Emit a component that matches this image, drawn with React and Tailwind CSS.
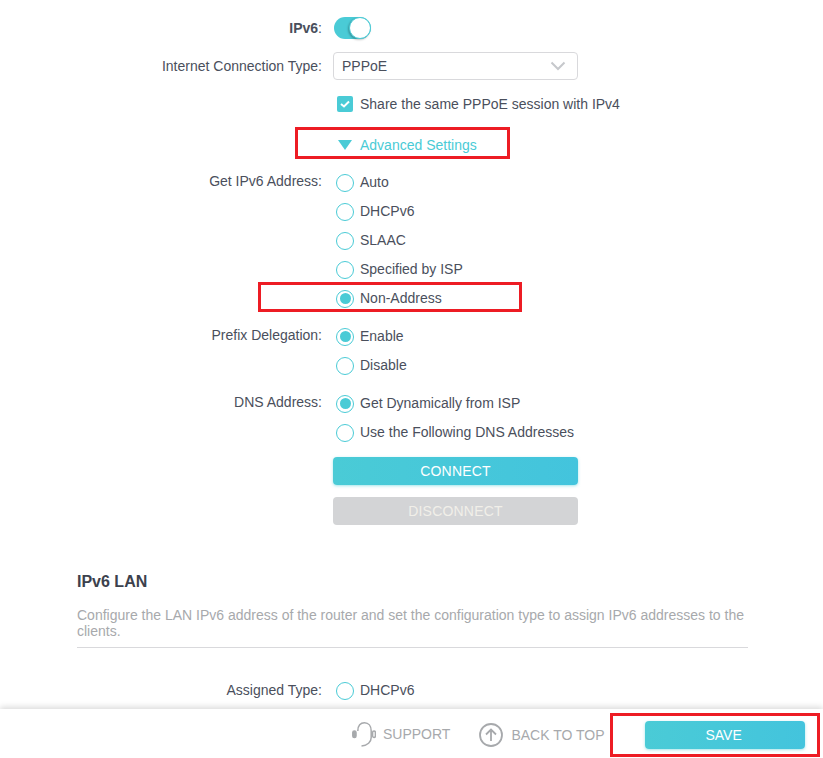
import React from "react";

const Radio = ({ label, checked }) => (
  <div className="flex items-center h-[29px]">
    <span className="w-[18px] h-[18px] ml-[3px] rounded-full border border-[#4acbd6] bg-white flex items-center justify-center">
      {checked && <span className="w-[11px] h-[11px] rounded-full bg-[#4acbd6]"></span>}
    </span>
    <span className="ml-[6px]">{label}</span>
  </div>
);

const Label = ({ children, className = "" }) => (
  <div className={`w-[322px] text-right ${className}`}>{children}</div>
);

const RedBox = ({ className }) => (
  <div className={`absolute border-[3px] border-[#ed1c24] pointer-events-none ${className}`}></div>
);

const App = () => {
  return (
    <div className="h-[758px] w-[823px] flex flex-col bg-white overflow-hidden text-[14px] text-[#4a4f5c] font-['Liberation_Sans',Arial,sans-serif]">
      <div className="relative flex-1 overflow-hidden">
        {/* ipv6 toggle */}
        <div className="flex items-center h-[24px] mt-[16px]">
          <Label>
            <span className="font-bold">IPv6</span>:
          </Label>
          <div className="ml-[12px] w-[37px] h-[22px] rounded-full bg-[#4acbd6] relative">
            <span className="absolute right-0 top-0 w-[22px] h-[22px] rounded-full bg-white border border-[#4acbd6] shadow-[-1px_1px_2px_rgba(0,0,0,0.25)]"></span>
          </div>
        </div>

        {/* connection type */}
        <div className="flex items-center h-[28px] mt-[12px]">
          <Label>Internet Connection Type:</Label>
          <div className="ml-[11px] w-[245px] h-[28px] rounded-[4px] border border-[#d9d9dc] flex items-center justify-between pl-[8px] pr-[11px]">
            <span>PPPoE</span>
            <svg width="16" height="10" viewBox="0 0 16 10" fill="none" stroke="#c6c8cc" strokeWidth="2">
              <path d="M1.5 1.5 L8 8 L14.5 1.5" />
            </svg>
          </div>
        </div>

        {/* share session */}
        <div className="flex items-center h-[20px] mt-[14px] ml-[337px]">
          <span className="w-[16px] h-[16px] rounded-[2px] bg-[#4acbd6] flex items-center justify-center">
            <svg width="10" height="8" viewBox="0 0 10 8" fill="none" stroke="#fff" strokeWidth="2">
              <path d="M1 4 L4 6.5 L9 1.5" />
            </svg>
          </span>
          <span className="ml-[7px]">Share the same PPPoE session with IPv4</span>
        </div>

        {/* advanced */}
        <div className="flex items-center h-[20px] mt-[21px] ml-[338px] text-[#4acbd6]">
          <svg width="14" height="10" viewBox="0 0 14 10" fill="#4acbd6">
            <path d="M0 0 H14 L7 10 Z" />
          </svg>
          <span className="ml-[8px]">Advanced Settings</span>
        </div>

        {/* get address */}
        <div className="flex mt-[13px]">
          <Label className="pt-[3px]">Get IPv6 Address:</Label>
          <div className="ml-[11px]">
            <Radio label="Auto" />
            <Radio label="DHCPv6" />
            <Radio label="SLAAC" />
            <Radio label="Specified by ISP" />
            <Radio label="Non-Address" checked />
          </div>
        </div>

        <div className="flex mt-[9px]">
          <Label className="pt-[3px]">Prefix Delegation:</Label>
          <div className="ml-[11px]">
            <Radio label="Enable" checked />
            <Radio label="Disable" />
          </div>
        </div>

        <div className="flex mt-[9px]">
          <Label className="pt-[3px]">DNS Address:</Label>
          <div className="ml-[11px]">
            <Radio label="Get Dynamically from ISP" checked />
            <Radio label="Use the Following DNS Addresses" />
          </div>
        </div>

        {/* buttons */}
        <div className="ml-[333px] w-[245px] mt-[10px] flex flex-col gap-[12px]">
          <button className="h-[28px] rounded-[4px] bg-gradient-to-r from-[#4acbd6] to-[#43c4dd] text-white tracking-[0.2px] shadow-[0_1px_3px_rgba(74,203,214,0.5)]">
            CONNECT
          </button>
          <button className="h-[28px] rounded-[4px] bg-[#d3d4d6] text-[#f1efe9] tracking-[0.2px]">DISCONNECT</button>
        </div>

        {/* ipv6 lan */}
        <div className="ml-[77px] w-[671px] mt-[48px]">
          <h2 className="font-bold text-[16px] leading-[18px] text-[#3c414d]">IPv6 LAN</h2>
          <p className="mt-[16px] leading-[16px] text-[#a7a9ac]">
            Configure the LAN IPv6 address of the router and set the configuration type to assign IPv6 addresses to the clients.
          </p>
          <hr className="mt-[8px] border-[#d9d9dc]" />
        </div>

        <div className="flex mt-[28px]">
          <Label className="pt-[4px]">Assigned Type:</Label>
          <div className="ml-[11px]">
            <Radio label="DHCPv6" />
          </div>
        </div>

        {/* annotations */}
        <RedBox className="left-[295px] top-[127px] w-[215px] h-[32px]" />
        <RedBox className="left-[258px] top-[282px] w-[264px] h-[30px]" />
      </div>

      {/* footer */}
      <div className="relative z-10 h-[49px] shrink-0 pt-[2px] bg-white shadow-[0_-2px_6px_rgba(0,0,0,0.15)] flex items-center text-[#a7a9ac]">
        <div className="ml-[352px] flex items-center">
          <svg width="24" height="25" viewBox="0 0 24 25" fill="none" stroke="#a7a9ac" strokeWidth="1.5">
            <path d="M5.8 9 C5.8 3.5 8.5 0.8 12.5 0.8 C16.5 0.8 19.2 4 19.2 9 V15.5 C19.2 20 15.5 23.5 9.5 24" />
            <rect x="0.8" y="9" width="3.2" height="6.5" rx="1.5" fill="#a7a9ac" />
            <rect x="20.6" y="9" width="2.8" height="6.5" rx="1.4" />
          </svg>
          <span className="ml-[7px] -mt-[1px]">SUPPORT</span>
        </div>
        <div className="ml-[28px] flex items-center">
          <svg className="ml-[1px]" width="24" height="24" viewBox="0 0 24 24" fill="none" stroke="#a7a9ac" strokeWidth="1.8">
            <circle cx="12" cy="12" r="11" />
            <path d="M12 18 V7 M7 11.5 L12 6.5 L17 11.5" />
          </svg>
          <span className="ml-[8px] mt-[1px]">BACK TO TOP</span>
        </div>
        <button className="ml-[40px] mt-[1px] w-[160px] h-[28px] pr-[2px] rounded-[4px] bg-gradient-to-r from-[#4acbd6] to-[#43c4dd] text-white shadow-[0_1px_3px_rgba(74,203,214,0.5)]">
          SAVE
        </button>
        <RedBox className="left-[610px] top-[4px] w-[210px] h-[44px]" />
      </div>
    </div>
  );
};

export default App;
